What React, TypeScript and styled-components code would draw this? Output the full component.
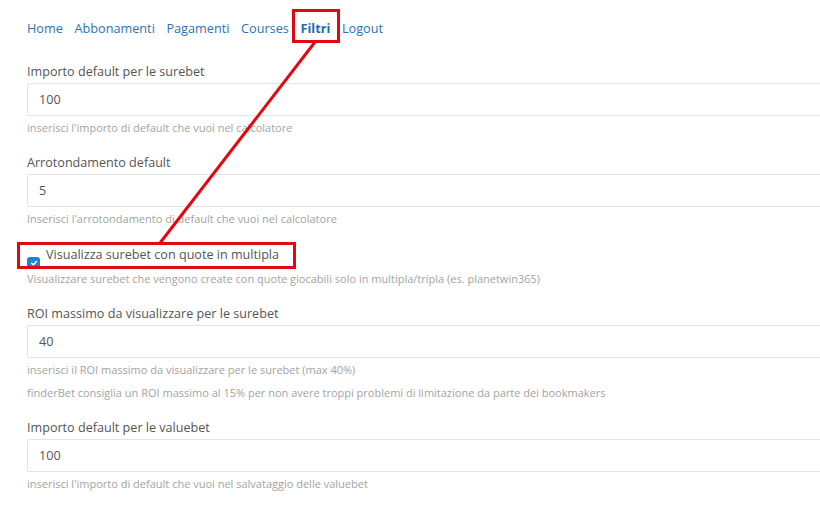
import styled, { createGlobalStyle } from "styled-components";

const GlobalStyle = createGlobalStyle`
  html, body {
    margin: 0;
    padding: 0;
    background: #ffffff;
    overflow: hidden;
  }
  body {
    font-family: "Open Sans", "Liberation Sans", sans-serif;
  }
`;

const Page = styled.div`
  position: relative;
  width: 820px;
  height: 518px;
  overflow: hidden;
  padding: 19px 0 0 27px;
  box-sizing: border-box;
`;

const Nav = styled.nav`
  display: flex;
  gap: 11.6px;
  height: 18px;
  margin-bottom: 26px;
`;

const NavLink = styled.a<{ $active?: boolean }>`
  font-size: 12.7px;
  line-height: 18px;
  color: ${(p) => (p.$active ? "#1e6bb0" : "#2a73b8")};
  font-weight: ${(p) => (p.$active ? 700 : 400)};
  text-decoration: none;
`;

const Form = styled.form`
  display: flex;
  flex-direction: column;
  gap: 18px;
  width: 830px;
`;

const Group = styled.div`
  display: flex;
  flex-direction: column;
`;

const Label = styled.label`
  font-size: 12.6px;
  line-height: 18px;
  color: #555555;
  margin-bottom: 2px;
`;

const Input = styled.input`
  box-sizing: border-box;
  width: 100%;
  height: 33px;
  border: 1px solid #e4e4e4;
  border-radius: 2px;
  padding: 0 11px;
  font-family: "Open Sans", "Liberation Sans", sans-serif;
  font-size: 12.6px;
  color: #555555;
  background: #ffffff;
  outline: none;
`;

const Help = styled.div<{ $gap?: number }>`
  font-size: 11px;
  line-height: 16px;
  color: #a3a3a3;
  margin-top: ${(p) => p.$gap ?? 4}px;
`;

const CheckRow = styled.label`
  display: flex;
  align-items: flex-start;
  gap: 6px;
  height: 18px;
  font-size: 12.6px;
  line-height: 18px;
  color: #555555;
  margin-top: 1px;
`;

const CheckBox = styled.span`
  display: inline-flex;
  align-items: center;
  justify-content: center;
  width: 13px;
  height: 12px;
  margin-top: 11px;
  margin-bottom: -5px;
  border-radius: 3px;
  background: #1d84d0;
  flex-shrink: 0;
`;

const Overlay = styled.svg`
  position: absolute;
  left: 0;
  top: 0;
  pointer-events: none;
`;

function Field({ label, value, help }: { label: string; value: string; help: string[] }) {
  return (
    <Group>
      <Label>{label}</Label>
      <Input defaultValue={value} />
      {help.map((h, i) => (
        <Help key={i} $gap={i === 0 ? 4 : 7}>
          {h}
        </Help>
      ))}
    </Group>
  );
}

export default function App() {
  const links = ["Home", "Abbonamenti", "Pagamenti", "Courses", "Filtri", "Logout"];
  return (
    <>
      <GlobalStyle />
      <Page>
        <Nav>
          {links.map((l) => (
            <NavLink key={l} href="#" $active={l === "Filtri"}>
              {l}
            </NavLink>
          ))}
        </Nav>
        <Form>
          <Field
            label="Importo default per le surebet"
            value="100"
            help={["inserisci l'importo di default che vuoi nel calcolatore"]}
          />
          <Field
            label="Arrotondamento default"
            value="5"
            help={["Inserisci l'arrotondamento di default che vuoi nel calcolatore"]}
          />
          <Group>
            <CheckRow>
              <CheckBox>
                <svg width="8" height="8" viewBox="0 0 10 10">
                  <path d="M2 5.2 L4.2 7.2 L8 3" fill="none" stroke="#fff" strokeWidth="1.8" strokeLinecap="round" strokeLinejoin="round" />
                </svg>
              </CheckBox>
              Visualizza surebet con quote in multipla
            </CheckRow>
            <Help $gap={7}>
              Visualizzare surebet che vengono create con quote giocabili solo in multipla/tripla (es. planetwin365)
            </Help>
          </Group>
          <Field
            label="ROI massimo da visualizzare per le surebet"
            value="40"
            help={[
              "inserisci il ROI massimo da visualizzare per le surebet (max 40%)",
              "finderBet consiglia un ROI massimo al 15% per non avere troppi problemi di limitazione da parte dei bookmakers",
            ]}
          />
          <Field
            label="Importo default per le valuebet"
            value="100"
            help={["inserisci l'importo di default che vuoi nel salvataggio delle valuebet"]}
          />
        </Form>
        <Overlay width="820" height="518">
          <rect x="293.5" y="10.5" width="45" height="31" fill="none" stroke="#e3070f" strokeWidth="3" />
          <line x1="315" y1="42" x2="160" y2="243" stroke="#e3070f" strokeWidth="3" />
          <rect x="18.5" y="243.5" width="276" height="24" fill="none" stroke="#e3070f" strokeWidth="3" />
        </Overlay>
      </Page>
    </>
  );
}
